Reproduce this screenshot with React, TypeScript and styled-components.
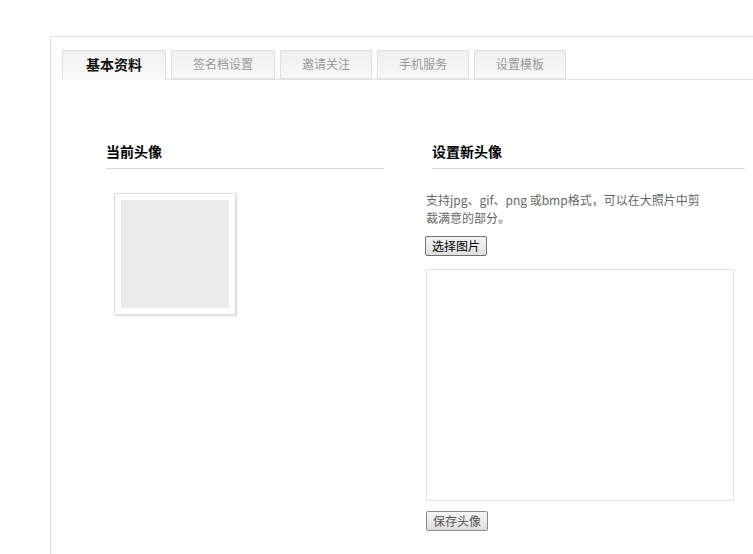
import React from "react";
import styled, { createGlobalStyle } from "styled-components";

const Global = createGlobalStyle`
  html, body { margin: 0; padding: 0; background: #fff; overflow: hidden; }
  body { font-family: "Noto Sans CJK SC", "Noto Sans", sans-serif; color: #333; }
`;

const Page = styled.div`
  width: 753px;
  height: 554px;
  overflow: hidden;
  padding: 36px 0 0 50px;
  box-sizing: border-box;
`;

const Panel = styled.div`
  width: 760px;
  height: 600px;
  border-top: 1px solid #e0e0e0;
  border-left: 1px solid #e0e0e0;
  padding: 13px 0 0 11px;
  box-sizing: border-box;
`;

const TabBar = styled.div`
  display: flex;
  gap: 5px;
  height: 30px;
  border-bottom: 1px solid #e2e2e2;
  box-sizing: border-box;
`;

const Tab = styled.div<{ $active?: boolean }>`
  height: ${(p) => (p.$active ? "30px" : "29px")};
  padding: 0 ${(p) => (p.$active ? "23px" : "21px")} 3px;
  display: flex;
  align-items: center;
  justify-content: center;
  box-sizing: border-box;
  border: 1px solid #e0e0e0;
  border-bottom: ${(p) => (p.$active ? "none" : "1px solid #e2e2e2")};
  background: ${(p) =>
    p.$active
      ? "linear-gradient(#efefef, #fcfcfc)"
      : "linear-gradient(#efefef, #f8f8f8)"};
  font-size: ${(p) => (p.$active ? "14px" : "12px")};
  font-weight: ${(p) => (p.$active ? 700 : 400)};
  color: ${(p) => (p.$active ? "#111" : "#999")};
  white-space: nowrap;
  cursor: pointer;
`;

const Columns = styled.div`
  display: flex;
  gap: 42px;
  margin: 60px 0 0 44px;
  align-items: flex-start;
`;

const Column = styled.div<{ $width: number }>`
  width: ${(p) => p.$width}px;
  display: flex;
  flex-direction: column;
  align-items: flex-start;
`;

const Heading = styled.h3<{ $indent?: number }>`
  margin: 0 0 0 ${(p) => p.$indent ?? 0}px;
  align-self: stretch;
  font-size: 14px;
  line-height: 22px;
  font-weight: 700;
  color: #000;
  padding-bottom: 6px;
  border-bottom: 1px solid #d8d8d8;
`;

const AvatarFrame = styled.div`
  margin: 24px 0 0 8px;
  padding: 6px;
  border: 1px solid #dcdcdc;
  background: #fff;
  box-shadow: 1px 1px 2px rgba(0, 0, 0, 0.15);
`;

const AvatarImage = styled.div`
  width: 108px;
  height: 108px;
  background: #ebebeb;
`;

const Hint = styled.p`
  margin: 22px 0 0;
  font-size: 12px;
  line-height: 18px;
  color: #666;
  white-space: nowrap;
`;

const Button = styled.button<{ $muted?: boolean }>`
  height: 20px;
  padding: 0 6px;
  font-family: "Noto Sans CJK SC", sans-serif;
  font-size: 12px;
  line-height: 18px;
  color: ${(p) => (p.$muted ? "#555" : "#000")};
  border: 1px solid ${(p) => (p.$muted ? "#8a8a8a" : "#707070")};
  border-radius: 2px;
  background: linear-gradient(#f6f6f6, #dedede);
  cursor: pointer;
`;

const PickButton = styled(Button)`
  margin: 9px 0 0 -1px;
`;

const SaveButton = styled(Button)`
  margin-top: 10px;
`;

const CropArea = styled.div`
  margin-top: 13px;
  width: 306px;
  height: 230px;
  border: 1px solid #e2e2e2;
`;

const tabs = ["基本资料", "签名档设置", "邀请关注", "手机服务", "设置模板"];

export default function App() {
  return (
    <>
      <Global />
      <Page>
        <Panel>
          <TabBar>
            {tabs.map((t, i) => (
              <Tab key={t} $active={i === 0}>
                {t}
              </Tab>
            ))}
          </TabBar>
          <Columns>
            <Column $width={278}>
              <Heading>当前头像</Heading>
              <AvatarFrame>
                <AvatarImage />
              </AvatarFrame>
            </Column>
            <Column $width={319}>
              <Heading $indent={6}>设置新头像</Heading>
              <Hint>
                支持jpg、gif、png 或bmp格式，可以在大照片中剪
                <br />
                裁满意的部分。
              </Hint>
              <PickButton>选择图片</PickButton>
              <CropArea />
              <SaveButton $muted>保存头像</SaveButton>
            </Column>
          </Columns>
        </Panel>
      </Page>
    </>
  );
}
